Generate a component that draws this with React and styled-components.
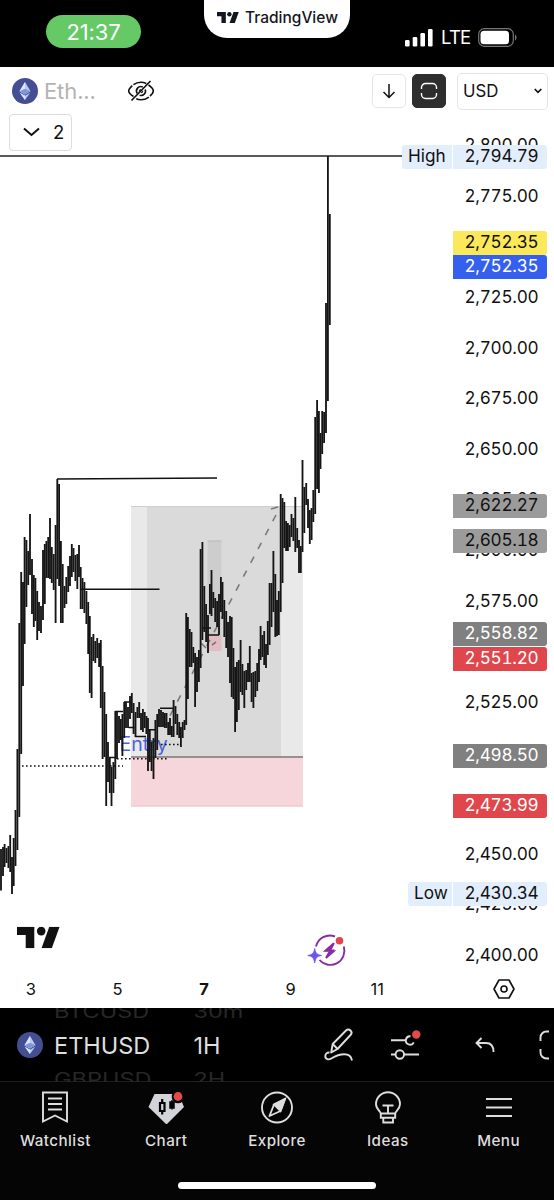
import React from 'react'
import styled, { createGlobalStyle } from 'styled-components'

const GlobalStyle = createGlobalStyle`
  * {
    box-sizing: border-box;
  }
  body {
    margin: 0;
    background: #000;
    font-family: Inter, 'Liberation Sans', sans-serif;
  }
  svg {
    display: block;
    flex: none;
  }
`

const Page = styled.div`
  display: flex;
  flex-direction: column;
  width: 554px;
  height: 1200px;
  overflow: hidden;
  background: #000;
`

/* status bar */
const StatusBar = styled.header`
  display: flex;
  align-items: flex-start;
  height: 67px;
  padding-left: 46px;
  color: #fff;
`
const Clock = styled.div`
  width: 95px;
  height: 33px;
  margin-top: 15px;
  border-radius: 17px;
  background: #65c966;
  font-size: 22px;
  line-height: 34px;
  letter-spacing: -0.1px;
  text-align: center;
`
const Notch = styled.div`
  display: flex;
  align-items: center;
  width: 146px;
  height: 38px;
  margin-left: 63px;
  padding: 0 0 3px 13px;
  gap: 6px;
  border-radius: 0 0 23px 23px;
  background: #fff;
  color: #131722;
  font-size: 15.5px;
  font-weight: 500;
`
const Signal = styled.div`
  display: flex;
  align-items: center;
  margin: 26px 0 0 55px;
  gap: 8px;
  font-size: 18.5px;
  line-height: 23px;
  letter-spacing: -0.8px;
`

/* chart */
const Chart = styled.main`
  position: relative;
  display: grid;
  grid-template-columns: 100%;
  grid-template-rows: 904px 37px;
  height: 941px;
  background: #fff;
  color: #111;
`
const Plot = styled.svg`
  grid-area: 1 / 1;
`
const Header = styled.div`
  display: flex;
  flex-direction: column;
  grid-area: 1 / 1;
  align-self: start;
  z-index: 1;
`
const HeaderRow = styled.div`
  display: flex;
  align-items: center;
  height: 47px;
  padding: 0 6px 0 12px;
`
const SymbolName = styled.span`
  width: 83px;
  margin-left: 6px;
  color: #b3b3b5;
  font-size: 22px;
  letter-spacing: -0.1px;
`
const Actions = styled.div`
  display: flex;
  align-items: center;
  margin-left: auto;
  gap: 6px;
`
const SquareButton = styled.button`
  display: flex;
  align-items: center;
  justify-content: center;
  width: 34px;
  height: 34px;
  padding: 0;
  border: 1px solid ${({ $dark }) => ($dark ? '#2e2e2e' : '#e6e6e6')};
  border-radius: 5px;
  background: ${({ $dark }) => ($dark ? '#2e2e2e' : '#fff')};
`
const Currency = styled.button`
  display: flex;
  align-items: center;
  justify-content: space-between;
  width: 91px;
  height: 37px;
  margin: 2px 0 0 5px;
  padding: 0 5px 2px;
  border: 1px solid #e6e6e6;
  border-radius: 5px;
  background: #fff;
  color: #111;
  font: 16.8px Inter, sans-serif;
`
const Legend = styled.button`
  display: flex;
  align-items: center;
  width: 63px;
  height: 37px;
  margin-left: 9px;
  padding: 0 0 1px 13px;
  gap: 13px;
  border: 1px solid #dcdcdc;
  border-radius: 4px;
  background: #fff;
  color: #111;
  font: 18.5px Inter, sans-serif;
`
const PriceTag = styled.div`
  position: absolute;
  right: 7px;
  display: flex;
  height: 24px;
  gap: 1px;
  color: ${({ $color }) => $color || '#111'};
  font-size: 17.2px;
  font-variant-numeric: tabular-nums;
  line-height: 21px;
  transform: translateY(-11px);
`
const TagPart = styled.span`
  width: ${({ $width }) => $width}px;
  background: ${({ $bg }) => $bg || 'transparent'};
  border-radius: ${({ $side }) => ($side === 'left' ? '3px 0 0 3px' : '0 3px 3px 0')};
  padding-left: ${({ $side }) => ($side === 'left' ? 6 : 11.5)}px;
  letter-spacing: ${({ $side }) => ($side === 'left' ? 0 : -0.28)}px;
  white-space: nowrap;
`
const TimeAxis = styled.div`
  display: flex;
  grid-area: 2 / 1;
  align-items: center;
  margin-left: -12.5px;
  padding-bottom: 1px;
  font-size: 16.5px;
`
const Day = styled.span`
  width: 86.6px;
  text-align: center;
  font-weight: ${({ $bold }) => ($bold ? 700 : 400)};
`
const AxisSettings = styled.div`
  display: flex;
  justify-content: center;
  width: 101px;
  margin-left: auto;
`

/* bottom toolbar */
const Toolbar = styled.div`
  display: flex;
  align-items: center;
  height: 74px;
  padding-left: 17px;
  border-bottom: 1px solid #1f1f1f;
  color: #dedede;
`
const Wheel = styled.div`
  display: flex;
  flex: none;
  flex-direction: column;
  align-items: flex-start;
  justify-content: center;
  width: ${({ $width }) => $width}px;
  height: 74px;
  padding-top: 2px;
  overflow: hidden;
  &:first-of-type {
    margin-left: 11px;
  }
`
const WheelItem = styled.div`
  flex: none;
  height: ${({ $faded }) => ($faded ? 30 : 38)}px;
  color: ${({ $faded }) => ($faded ? '#272727' : '#dedede')};
  font-size: 23.5px;
  line-height: ${({ $faded }) => ($faded ? 30 : 38)}px;
  transform: ${({ $faded }) => ($faded ? 'scaleY(0.78)' : 'none')};
`
const DrawingTools = styled.div`
  display: flex;
  align-items: center;
  gap: 36px;
`
const Divider = styled.div`
  width: 1px;
  height: 26px;
  margin: 0 30px 0 24px;
  background: #2a2a2a;
`

/* tab bar */
const TabBar = styled.nav`
  display: grid;
  grid-template-columns: repeat(5, 1fr);
  height: 100px;
  background: #050505;
  color: #dedede;
`
const Tab = styled.div`
  display: flex;
  flex-direction: column;
  align-items: center;
  padding-top: 8px;
  gap: 6px;
  font-size: 15.2px;
  font-weight: 500;
  line-height: 22px;
  letter-spacing: 0.45px;
`
const HomeArea = styled.div`
  display: flex;
  justify-content: center;
  flex: 1;
  background: #050505;
`
const HomeBar = styled.div`
  width: 198px;
  height: 7px;
  border-radius: 4px;
  background: #fff;
`

// [x, high, low]
const bars = [
  [1, 849, 890.5], [3, 847, 876], [4.6, 844, 867], [6.5, 848, 863], [8.4, 846, 868], [10.2, 835, 872],
  [12, 857, 894], [13.7, 838, 886], [15.5, 810, 866], [17.4, 749, 850], [19.3, 623, 817], [21.2, 572, 754],
  [23, 582, 686], [24.6, 537, 644], [26.4, 540, 607], [28.2, 551, 585], [30, 514, 575], [32, 559, 614],
  [33.8, 575, 627], [35.4, 578, 621], [37.2, 591, 640], [39, 602, 631], [41, 606, 633], [43, 550, 620],
  [44.8, 544, 604], [46.4, 541, 578], [48.2, 537, 578], [50, 518, 579], [51.8, 547, 583], [53.7, 554, 590],
  [55.6, 525, 623], [57.3, 479, 579], [59.1, 484, 586], [60.9, 541, 623], [62.7, 564, 623], [64.5, 586, 608],
  [66.3, 577, 604], [68.2, 566, 592], [70, 556, 586], [71.8, 544, 577], [73.5, 548, 572], [75.4, 555, 581],
  [77.3, 554, 589], [79, 545, 577], [80.7, 567, 609], [82.5, 578, 609], [84.4, 582, 613], [86.4, 591, 624],
  [88.2, 602, 654], [89.8, 616, 693], [91.6, 637, 698], [93.4, 634, 661], [95.3, 641, 663], [97.2, 638, 658],
  [99.1, 643, 667], [100.8, 640, 708], [102.6, 666, 759], [104.4, 692, 757], [106.2, 714, 806], [108, 742, 782],
  [109.8, 757, 793], [111.5, 767, 806], [113.4, 762, 793], [115.3, 711, 779], [117, 712, 759], [119, 716, 743],
  [120.8, 719, 740], [122.4, 714, 756], [124.2, 702, 738], [126, 702, 728], [128, 707, 728], [130, 696, 719],
  [131.8, 693, 713], [133.6, 703, 734], [135.5, 712, 737], [137.4, 707, 718], [139.2, 702, 718], [141, 713, 730],
  [142.9, 709, 732], [144.7, 712, 728], [146.4, 716, 734], [148, 718, 771], [149.8, 730, 762], [151.6, 742, 771],
  [153.5, 738, 779], [155.4, 720, 758], [157.2, 714, 750], [159, 709, 727], [161, 710, 727], [163, 712, 727],
  [164.8, 713, 728], [166.5, 713, 728], [168.2, 722, 735], [170, 718, 735], [171.8, 726, 737], [173.6, 700, 737],
  [175.5, 706, 724], [177.3, 714, 735], [179.2, 722, 738], [180.9, 727, 747], [182.7, 722, 738], [184.5, 720, 730],
  [186.2, 613, 725], [187.9, 617, 699], [189.7, 629, 667], [191.5, 632, 667], [193.3, 647, 663], [195.1, 653, 707],
  [197, 657, 692], [198.9, 650, 682], [200.6, 549, 668], [202.4, 542, 640], [204.3, 586, 632], [206.1, 604, 642],
  [208, 615, 653], [209.9, 584, 614], [211.5, 570, 616], [213.3, 592, 608], [215.2, 598, 622], [217.1, 601, 627],
  [219, 594, 635], [220.9, 577, 612], [222.5, 582, 619], [224.3, 600, 637], [226.2, 611, 648], [228, 622, 657],
  [230, 616, 683], [231.7, 617, 697], [233.4, 648, 699], [235.1, 667, 732], [236.9, 662, 722], [238.8, 660, 710],
  [240.6, 640, 692], [242.4, 664, 695], [244.3, 671, 708], [246.2, 670, 690], [248, 663, 682], [249.8, 646, 682],
  [251.6, 673, 702], [253.4, 672, 708], [255.3, 671, 697], [257.2, 663, 691], [259, 649, 682], [260.6, 626, 660],
  [262.4, 635, 657], [264.2, 631, 665], [266, 644, 668], [267.8, 621, 655], [269.6, 583, 645], [271.5, 583, 627],
  [273.4, 551, 612], [275.3, 574, 637], [277, 600, 636], [278.8, 591, 635], [280.7, 494, 612], [282.5, 498, 583],
  [284.3, 502, 548], [286.1, 521, 551], [287.9, 523, 551], [289.7, 525, 547], [291.5, 514, 537], [293.4, 518, 541],
  [295.3, 497, 552], [297.2, 528, 548], [299, 540, 573], [300.8, 546, 573], [302.5, 460, 552], [304.3, 487, 533],
  [306.2, 483, 505], [308, 499, 528], [309.8, 510, 544], [311.6, 508, 540], [313.3, 490, 522], [315.2, 417, 514],
  [317.1, 400, 489], [318.9, 411, 493], [320.5, 433, 469], [322.2, 411, 454], [324.1, 412, 443], [326, 303, 433],
  [327.9, 156, 401], [329.8, 214, 325],
]

const CHART_TOP = 67
const priceToTop = price => Math.round(196 + (2775 - price) * 2.0231 - CHART_TOP)

const ticks = [2800, 2775, 2725, 2700, 2675, 2650, 2625, 2600, 2575, 2525, 2450, 2425, 2400]

const tags = [
  { price: 2794.79, bg: '#e3eefc', label: 'High', labelWidth: 50 },
  { price: 2752.35, bg: '#fce95b' },
  { price: 2752.35, bg: '#355fef', color: '#fff', shift: 24 },
  { price: 2622.27, bg: '#9b9b9b' },
  { price: 2605.18, bg: '#9b9b9b' },
  { price: 2558.82, bg: '#808080', color: '#fff' },
  { price: 2551.2, bg: '#df474c', color: '#fff', shift: 9 },
  { price: 2498.5, bg: '#808080', color: '#fff' },
  { price: 2473.99, bg: '#df474c', color: '#fff' },
  { price: 2430.34, bg: '#e3eefc', label: 'Low', labelWidth: 44 },
]

const format = price => price.toLocaleString('en-US', { minimumFractionDigits: 2 })

const TvLogo = ({ width }) => (
  <svg width={width} height={width / 2} viewBox="0 0 43 21.5" fill="currentColor">
    <path d="M0 0h17.3v21.5H8.700V8.300H0z" />
    <circle cx="24.200" cy="4.300" r="4.300" />
    <path d="M32.300 0H42.600L34.800 21.500H24.500z" />
  </svg>
)

const EthIcon = () => (
  <svg width="26" height="26" viewBox="0 0 26 26">
    <circle cx="13" cy="13" r="13" fill="#434e93" />
    <path d="M13 4l5.5 9.2L13 16.5l-5.5-3.3z" fill="#b9c9f5" />
    <path d="M13 4v12.5l-5.5-3.3z" fill="#dce6fd" />
    <path d="M13 10.8l5.5 2.4L13 16.5l-5.5-3.3z" fill="#7f96da" />
    <path d="M7.8 14.7l5.2 3.1 5.2-3.1L13 22z" fill="#b9c9f5" />
    <path d="M7.8 14.7l5.2 3.1V22z" fill="#dce6fd" />
  </svg>
)

const HiddenIcon = () => (
  <svg width="28" height="24" viewBox="0 0 28 24" fill="none" stroke="#111" strokeWidth="1.6">
    <path d="M6.500 17.500C3.500 15.500 1.700 13.300 1.700 12 1.700 10 6.500 3.200 14 3.200c2 0 3.700.5 5.300 1.200M21.500 6c3.300 2.200 4.800 4.700 4.800 6 0 2-4.800 8.800-12.300 8.800-1.800 0-3.400-.4-4.800-1" strokeDasharray="14 1.500" />
    <path d="M10.300 14.500a4.400 4.400 0 0 1 5.500-6.500M18.200 10.500a4.400 4.400 0 0 1-5.600 5.700" />
    <path d="M12.300 12.500a2 2 0 0 1 1.700-2M15.800 11.700a2 2 0 0 1-1.800 2" strokeWidth="1.200" />
    <path d="M4.500 21.500L23.500 2" strokeWidth="1.700" />
  </svg>
)

const Candles = () => (
  <g stroke="#151515" strokeWidth="1.850">
    {bars.map(([x, high, low]) => (
      <line key={x} x1={x} x2={x} y1={high} y2={low} />
    ))}
  </g>
)

const Positions = () => (
  <>
    <rect x="131" y="506" width="172" height="251" fill="#e9e9e9" />
    <rect x="147" y="506" width="134" height="251" fill="#dadada" />
    <path d="M131 506.500H303" stroke="#cfcfcf" />
    <rect x="131" y="757" width="172" height="49.500" fill="#f6d6da" />
    <path d="M131 806H303" stroke="#ecc4c9" />
    <rect x="207.500" y="540.500" width="14" height="94.500" fill="#cdcdcd" />
    <path d="M207.500 541h14" stroke="#bcbcbc" />
    <rect x="207.500" y="635" width="14" height="16" fill="#e2bcc2" />
    <path d="M131 757H303" stroke="#7d7577" strokeWidth="1.300" />
    <path d="M276 515L165 725" stroke="#7a7a7a" strokeWidth="1.600" strokeDasharray="7 8.700" />
    <path d="M271 509l7-2M201 643l5 5M212 645l4-3" stroke="#7a7a7a" strokeWidth="1.600" />
  </>
)

const Levels = () => (
  <g stroke="#111" fill="none" strokeWidth="1.400">
    <path d="M0 156H403" stroke="#222" strokeWidth="1.700" />
    <path d="M57 479L217 478" />
    <path d="M81 589.300H159.500" />
    <path d="M115 711.500h8M124 702h7M128.500 727.500h6M135 736.500h11M148 729.700h8M160 708.300h14M109 757.500h6M202 628h9M208 635h11" />
    <path d="M22 766H123M117 758.700H167M161 744.500H180" strokeWidth="1.600" strokeDasharray="1.600 2.400" />
  </g>
)

const Spark = () => (
  <g fill="none" stroke="#892ba5" strokeWidth="1.900">
    <path d="M335 936.500A14.200 14.200 0 0 0 316 946.500M343.800 946.500A14.200 14.200 0 0 1 319.500 960" />
    <path d="M333.500 943.500L325 951h9l-8 7 3-5.500M334 943l-3.500 7" strokeWidth="1.700" />
    <path d="M334 943l-9 8.200h4L325.500 958l9.500-8.500h-4z" fill="#892ba5" stroke="none" />
    <circle cx="339.500" cy="940.700" r="3.800" fill="#df474c" stroke="none" />
    <path d="M314.700 948.500c1 4.800 2 6 6.800 7-4.800 1-5.800 2.200-6.800 7.500-1-5.300-2-6.500-6.900-7.500 4.900-1 5.900-2.200 6.900-7z" fill="#6d55f2" stroke="#6d55f2" strokeWidth="0.800" />
  </g>
)

const DrawIcon = () => (
  <svg width="30" height="34" viewBox="0 0 30 34" fill="none" stroke="#dedede" strokeWidth="1.900">
    <path d="M7.200 24.500l1.500-8.500L22 2.500c1.300-1.300 3.200-1.300 4.500 0s1.300 3.200 0 4.500L13.500 21z" strokeLinejoin="round" />
    <path d="M8.700 16l4.900 5" />
    <path d="M5.500 24.500C3 24.300 1.300 25.800 1.300 28.200c0 3.300 3.500 3.800 6 2.300 4.500-2.700 8-4.200 13-4.200 4 0 7 2 7.700 6.200" />
  </svg>
)

const SettingsIcon = () => (
  <svg width="31" height="30" viewBox="0 0 31 30" fill="none" stroke="#dedede" strokeWidth="1.900">
    <path d="M1 10.300h14M20.500 6.300a4.200 4.200 0 1 0 3.300 6" />
    <path d="M1 24.500h4.500M14 24.500h15" />
    <circle cx="9.800" cy="24.500" r="4.200" />
    <circle cx="26.300" cy="4.500" r="4.200" fill="#e5484d" stroke="none" />
  </svg>
)

const Watchlist = () => (
  <svg width="28" height="34" viewBox="0 0 28 34" fill="none" stroke="currentColor" strokeWidth="1.900">
    <path d="M2 2.500h24v29l-12-6-12 6z" />
    <path d="M7 8.500h14M7 14h14M7 19.500h14" />
  </svg>
)
const ChartIcon = () => (
  <svg width="36" height="34" viewBox="0 0 36 34">
    <path d="M6.500 4h24L36 17 18.500 34.500.500 17z" fill="#d3d4da" />
    <path d="M12 13h4.500v8H12zM14.200 9v4M14.200 21v3.500" fill="none" stroke="#050505" strokeWidth="2.200" />
    <path d="M22 12h4v6h-4zM24 10v9.500" fill="#050505" stroke="#050505" strokeWidth="1.500" />
    <circle cx="30" cy="7" r="6.300" fill="#050505" />
    <circle cx="30" cy="6.500" r="4.400" fill="#e5484d" />
  </svg>
)
const Explore = () => (
  <svg width="34" height="34" viewBox="0 0 34 34" fill="none" stroke="currentColor" strokeWidth="1.900">
    <circle cx="17" cy="17.500" r="15" />
    <path d="M25 9l-4.500 12L9.500 26 14 14.500z" strokeLinejoin="round" />
    <path d="M25 9l-4.500 12-6.500-6.500z" fill="currentColor" />
  </svg>
)
const Ideas = () => (
  <svg width="28" height="34" viewBox="0 0 28 34" fill="none" stroke="currentColor" strokeWidth="1.900">
    <path d="M6.800 23.500c0-2-4.800-4.500-4.800-9.300a12 12 0 0 1 24 0c0 4.800-4.800 7.300-4.800 9.300z" />
    <path d="M6.800 23.500v4.300h14.400v-4.300M9.300 28v4.500h9.700v-4.500M8.500 15.500h11M14 15.500v8" />
  </svg>
)
const Menu = () => (
  <svg width="28" height="34" viewBox="0 0 28 34" stroke="currentColor" strokeWidth="2">
    <path d="M1 9h26M1 17.500h26M1 26h26" />
  </svg>
)

const tabs = [
  ['Watchlist', Watchlist],
  ['Chart', ChartIcon],
  ['Explore', Explore],
  ['Ideas', Ideas],
  ['Menu', Menu],
]

export default () => (
  <Page>
    <GlobalStyle />
    <StatusBar>
      <Clock>21:37</Clock>
      <Notch>
        <TvLogo width={22} />
        TradingView
      </Notch>
      <Signal>
        <svg width="28" height="19" viewBox="0 0 28 19" fill="#fff">
          <rect x="0" y="12" width="4.600" height="6.500" rx="1.300" />
          <rect x="7.700" y="9" width="4.600" height="9.500" rx="1.300" />
          <rect x="15.400" y="5" width="4.600" height="13.500" rx="1.300" />
          <rect x="23" y="1" width="4.600" height="17.500" rx="1.300" />
        </svg>
        LTE
        <svg width="39" height="19" viewBox="0 0 39 19">
          <rect x=".7" y=".7" width="34.600" height="17.600" rx="5.500" fill="none" stroke="#777" strokeWidth="1.200" />
          <rect x="2.500" y="2.700" width="28.500" height="13.600" rx="3.500" fill="#fff" />
          <path d="M37 6.500c2 1 2 5 0 6z" fill="#777" />
        </svg>
      </Signal>
    </StatusBar>

    <Chart>
      <Plot width="554" height="904" viewBox="0 67 554 904">
        <Positions />
        <text x="119.500" y="750.500" fill="#4a63dc" fontSize="19.500">Entry</text>
        <Levels />
        <Candles />
        <Spark />
        <g transform="translate(17 926.800)" fill="#111">
          <TvLogo width={43} />
        </g>
      </Plot>
      <Header>
        <HeaderRow>
          <EthIcon />
          <SymbolName>Eth...</SymbolName>
          <HiddenIcon />
          <Actions>
            <SquareButton>
              <svg width="16" height="18" viewBox="0 0 16 18" fill="none" stroke="#111" strokeWidth="1.500">
                <path d="M8 2v13.500M2.500 10L8 15.500l5.500-5.500" />
              </svg>
            </SquareButton>
            <SquareButton $dark>
              <svg width="18" height="18" viewBox="0 0 18 18" fill="none" stroke="#fff" strokeWidth="1.400">
                <path d="M1.500 7V5.500a4 4 0 0 1 4-4h7a4 4 0 0 1 4 4V7M1.500 11v1.500a4 4 0 0 0 4 4h7a4 4 0 0 0 4-4V11" />
              </svg>
            </SquareButton>
            <Currency>
              USD
              <svg width="8" height="6" viewBox="0 0 8 6" fill="none" stroke="#111" strokeWidth="1.700">
                <path d="M.7 1L4 4.300 7.300 1" />
              </svg>
            </Currency>
          </Actions>
        </HeaderRow>
        <Legend>
          <svg width="17" height="10" viewBox="0 0 17 10" fill="none" stroke="#111" strokeWidth="2">
            <path d="M1 1.500l7.500 6.500L16 1.500" />
          </svg>
          2
        </Legend>
      </Header>
      {ticks.map(price => (
        <PriceTag key={price} style={{ top: priceToTop(price) }}>
          <TagPart $width={94}>{format(price)}</TagPart>
        </PriceTag>
      ))}
      {tags.map(({ price, bg, color, label, labelWidth, shift = 0 }) => (
        <PriceTag key={price + shift} $color={color} style={{ top: priceToTop(price) + shift }}>
          {label && <TagPart $side="left" $bg={bg} $width={labelWidth}>{label}</TagPart>}
          <TagPart $bg={bg} $width={94}>{format(price)}</TagPart>
        </PriceTag>
      ))}
      <TimeAxis>
        {[3, 5, 7, 9, 11].map(day => (
          <Day key={day} $bold={day === 7}>{day}</Day>
        ))}
        <AxisSettings>
          <svg width="22" height="20" viewBox="0 0 22 20" fill="none" stroke="#111" strokeWidth="1.600">
            <path d="M6 1h10l5 9-5 9H6l-5-9z" strokeLinejoin="round" />
            <circle cx="11" cy="10" r="3" />
          </svg>
        </AxisSettings>
      </TimeAxis>
    </Chart>

    <Toolbar>
      <EthIcon />
      <Wheel $width={139.5}>
        <WheelItem $faded>BTCUSD</WheelItem>
        <WheelItem>ETHUSD</WheelItem>
        <WheelItem $faded>GBPUSD</WheelItem>
      </Wheel>
      <Wheel $width={130.5}>
        <WheelItem $faded>30m</WheelItem>
        <WheelItem>1H</WheelItem>
        <WheelItem $faded>2H</WheelItem>
      </Wheel>
      <DrawingTools>
        <DrawIcon />
        <SettingsIcon />
      </DrawingTools>
      <Divider />
      <svg width="20" height="16" viewBox="0 0 20 16" fill="none" stroke="#dedede" strokeWidth="1.900">
        <path d="M6.500 1L1.500 6l5 5M1.500 6H11c4.500 0 7.500 3 7.500 9" />
      </svg>
      <svg width="64" height="32" viewBox="0 0 64 32" fill="none" stroke="#dedede" strokeWidth="1.900">
        <path d="M45.500 12V8.500a6 6 0 0 1 6-6H54M45.500 20v3.500a6 6 0 0 0 6 6H54" />
      </svg>
    </Toolbar>

    <TabBar>
      {tabs.map(([name, Icon]) => (
        <Tab key={name}>
          <Icon />
          {name}
        </Tab>
      ))}
    </TabBar>
    <HomeArea>
      <HomeBar />
    </HomeArea>
  </Page>
)
